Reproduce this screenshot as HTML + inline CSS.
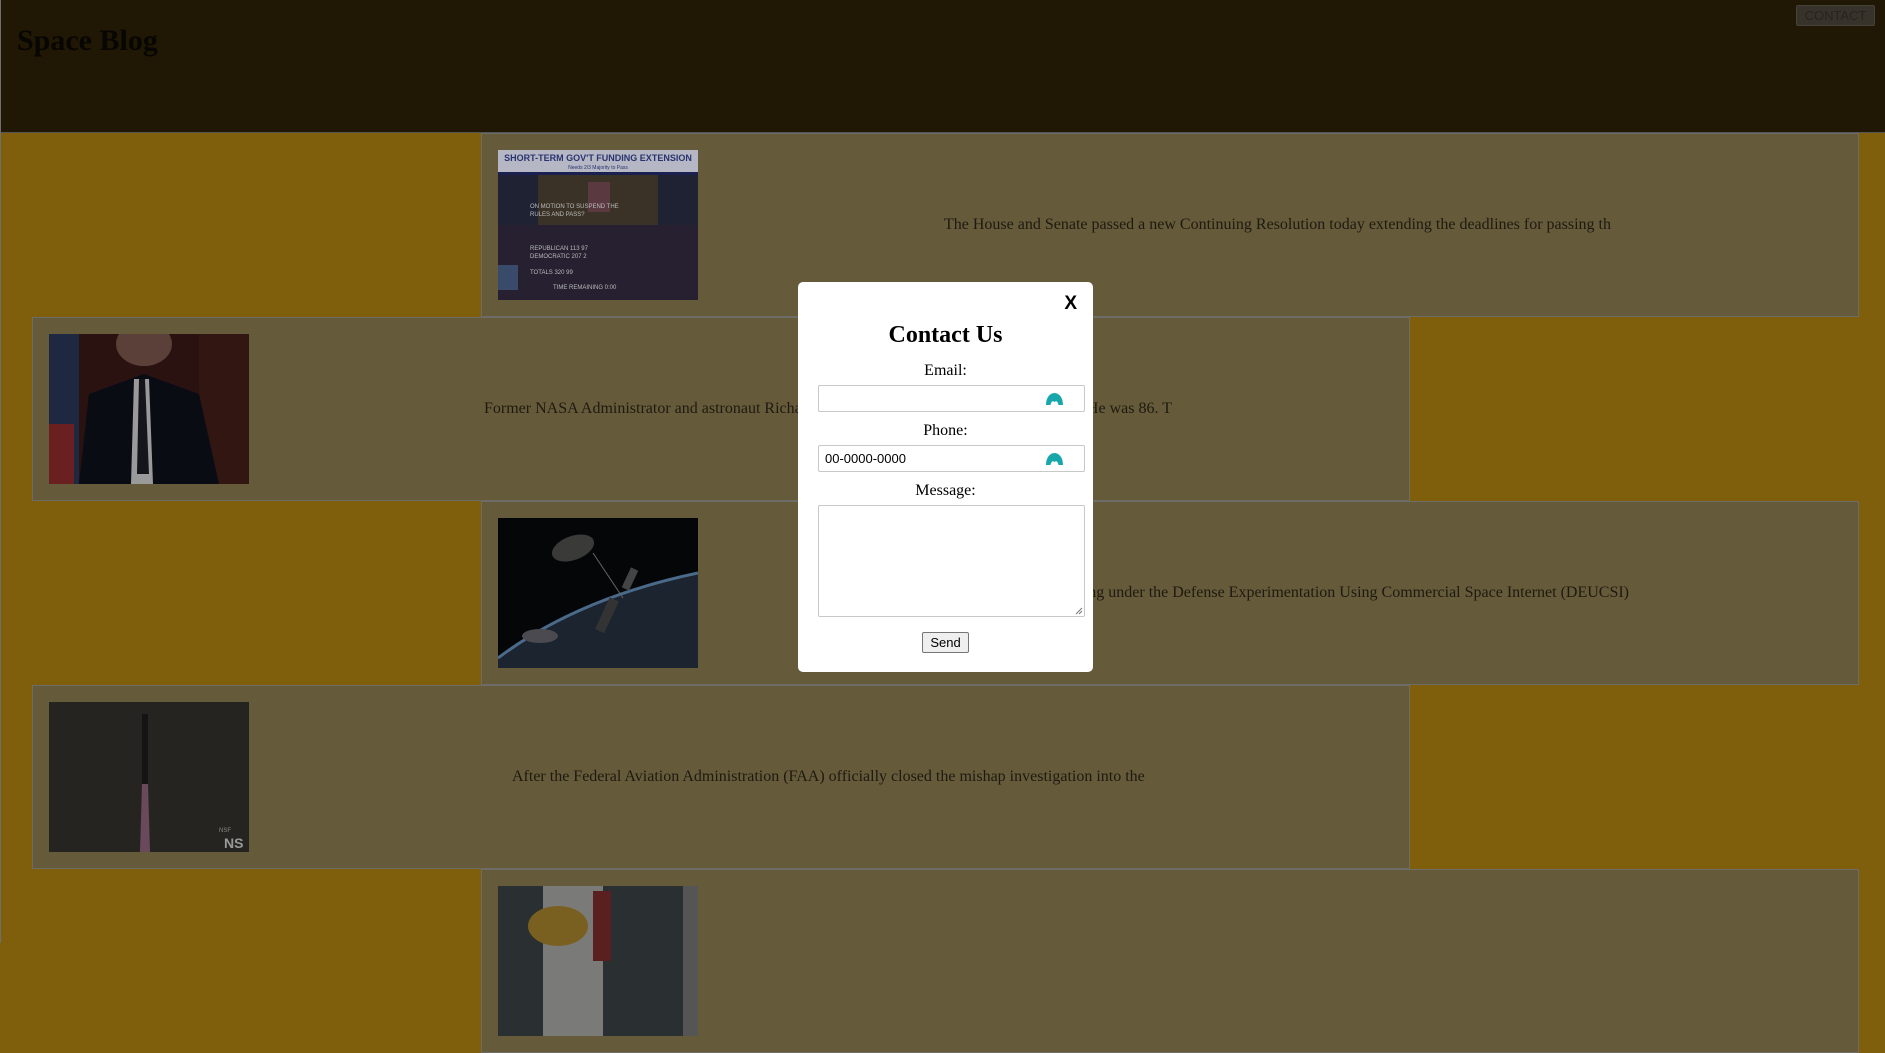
<!DOCTYPE html>
<html><head><meta charset="utf-8"><style>
*{box-sizing:border-box;margin:0;padding:0}
body{width:1885px;height:943px;overflow:hidden;background:#7f5f0b;font-family:"Liberation Serif",serif;position:relative}
.lline{position:absolute;left:0;top:0;width:1px;height:943px;background:#6e6e6e}
.hdr{position:absolute;left:1px;top:0;width:1884px;height:133px;background:#201804;border-bottom:1px solid #555}
.hdr h1{position:absolute;left:16px;top:23px;font-size:30px;font-weight:bold;color:#080602;line-height:36px}
.cbtn{position:absolute;left:1795px;top:5px;width:79px;height:21px;background:#37332a;border:1px solid #44403a;border-radius:2px;font-family:"Liberation Sans",sans-serif;font-size:13px;color:#272420;text-align:center;line-height:19px}
.card{position:absolute;height:184px;background:#655a3a;border:1px solid #6e6c66}
.img{position:absolute;left:16px;top:16px;width:200px;height:150px;overflow:hidden}
.txt{position:absolute;white-space:nowrap;font-size:16px;color:#1f1a10;line-height:20px}
.modal{position:absolute;left:798px;top:282px;width:295px;height:390px;background:#fff;border-radius:5px}
.x{position:absolute;right:16px;top:11px;font-family:"Liberation Sans",sans-serif;font-weight:bold;font-size:19px;color:#000}
.modal h2{position:absolute;left:0;width:100%;top:38px;text-align:center;font-size:24px;font-weight:bold;line-height:30px}
.lbl{position:absolute;left:0;width:100%;text-align:center;font-size:16px;line-height:20px;color:#000}
.inp{position:absolute;left:20px;width:267px;height:27px;border:1px solid #c8c8c8;border-radius:2px;font-family:"Liberation Sans",sans-serif;font-size:13px;line-height:25px;padding-left:6px;color:#000}
.ic{position:absolute;right:21px;top:6px;display:block}
.send{position:absolute;left:124px;top:350px;width:47px;height:21px;border:1px solid #767676;border-radius:2px;background:#efefef;font-family:"Liberation Sans",sans-serif;font-size:13px;text-align:center;line-height:19px}
</style></head><body>
<div class="lline"></div>
<div class="hdr"><h1>Space Blog</h1><div class="cbtn">CONTACT</div></div>

<div class="card" style="left:481px;top:133px;width:1378px">
 <div class="img"><svg width="200" height="150"><rect width="200" height="150" fill="#1f2233"/><rect width="200" height="22" fill="#b5b8c4"/><text x="100" y="11" font-size="9" font-family="Liberation Sans" font-weight="bold" fill="#2a3270" text-anchor="middle">SHORT-TERM GOV'T FUNDING EXTENSION</text><text x="100" y="19" font-size="5" font-family="Liberation Sans" fill="#2a3270" text-anchor="middle">Needs 2/3 Majority to Pass</text><rect y="22" width="200" height="3" fill="#1a2050"/><rect x="40" y="25" width="120" height="50" fill="#3a3226"/><rect x="90" y="32" width="22" height="30" fill="#5a3a40"/><rect y="75" width="200" height="75" fill="#262030"/><rect x="0" y="115" width="20" height="25" fill="#3a4a6a"/><text x="32" y="58" font-size="6" fill="#bbb" font-family="Liberation Sans">ON MOTION TO SUSPEND THE</text><text x="32" y="66" font-size="6" fill="#bbb" font-family="Liberation Sans">RULES AND PASS?</text><text x="32" y="100" font-size="6" fill="#bbb" font-family="Liberation Sans">REPUBLICAN  113  97</text><text x="32" y="108" font-size="6" fill="#bbb" font-family="Liberation Sans">DEMOCRATIC  207  2</text><text x="32" y="124" font-size="6" fill="#bbb" font-family="Liberation Sans">TOTALS  320  99</text><text x="55" y="139" font-size="6" fill="#bbb" font-family="Liberation Sans">TIME REMAINING  0:00</text></svg></div>
 <div class="txt" style="left:462px;top:81px">The House and Senate passed a new Continuing Resolution today extending the deadlines for passing th</div>
</div>

<div class="card" style="left:32px;top:317px;width:1378px">
 <div class="img"><svg width="200" height="150"><rect width="200" height="150" fill="#2a1210"/><rect x="0" width="30" height="150" fill="#1e2840"/><rect x="0" y="90" width="25" height="60" fill="#6a2020"/><rect x="150" width="50" height="150" fill="#321612"/><ellipse cx="95" cy="10" rx="28" ry="22" fill="#5a4038"/><path d="M30 150 L40 60 L95 40 L150 60 L170 150Z" fill="#0a0c14"/><path d="M85 45 L100 45 L104 150 L82 150Z" fill="#9a9a9a"/><path d="M90 45 L96 45 L100 140 L88 140Z" fill="#14161c"/></svg></div>
 <div class="txt" style="left:451px;top:81px">Former NASA Administrator and astronaut Richard Truly passed away on Tuesday, Feb 27th. He was 86. T</div>
</div>

<div class="card" style="left:481px;top:501px;width:1378px">
 <div class="img"><svg width="200" height="150"><rect width="200" height="150" fill="#050608"/><path d="M0 150 L0 140 Q80 80 200 55 L200 150Z" fill="#1c2430"/><path d="M0 140 Q80 80 200 55" stroke="#4a6a8a" stroke-width="3" fill="none"/><ellipse cx="42" cy="118" rx="18" ry="7" fill="#4a4a50"/><ellipse cx="75" cy="30" rx="22" ry="12" transform="rotate(-20 75 30)" fill="#3a3a38"/><line x1="95" y1="35" x2="125" y2="80" stroke="#666"/><rect x="105" y="80" width="10" height="35" fill="#333" transform="rotate(25 110 95)"/><rect x="128" y="50" width="8" height="22" fill="#444" transform="rotate(25 132 61)"/></svg></div>
 <div class="txt" style="right:229px;top:81px">SpaceX has completed its first satellite testing under the Defense Experimentation Using Commercial Space Internet (DEUCSI)</div>
</div>

<div class="card" style="left:32px;top:685px;width:1378px">
 <div class="img"><svg width="200" height="150"><rect width="200" height="150" fill="#262420"/><rect x="93" y="12" width="6" height="70" fill="#141414"/><path d="M93 82 L99 82 L101 150 L91 150Z" fill="#6a4a5a"/><text x="170" y="130" font-size="6" fill="#888" font-family="Liberation Sans">NSF</text><text x="175" y="146" font-size="14" font-weight="bold" fill="#999" font-family="Liberation Sans">NS</text></svg></div>
 <div class="txt" style="left:479px;top:81px">After the Federal Aviation Administration (FAA) officially closed the mishap investigation into the</div>
</div>

<div class="card" style="left:481px;top:869px;width:1378px">
 <div class="img"><svg width="200" height="150"><rect width="200" height="150" fill="#2a3032"/><rect x="45" y="0" width="60" height="150" fill="#7a7a78"/><rect x="95" y="5" width="18" height="70" fill="#5a2020"/><ellipse cx="60" cy="40" rx="30" ry="20" fill="#7a6020"/><rect x="185" width="15" height="150" fill="#555"/></svg></div>
</div>

<div class="modal">
 <div class="x">X</div>
 <h2>Contact Us</h2>
 <div class="lbl" style="top:79px">Email:</div>
 <div class="inp" style="top:103px"><svg class="ic" width="17" height="13" viewBox="0 0 17 13"><path d="M0 13 C0 -3 17 -3 17 13 L12.5 13 C12 10 10.5 8 8.5 10 C6.5 8 5 10 4.5 13 Z" fill="#17a7aa"/></svg></div>
 <div class="lbl" style="top:139px">Phone:</div>
 <div class="inp" style="top:163px">00-0000-0000<svg class="ic" width="17" height="13" viewBox="0 0 17 13"><path d="M0 13 C0 -3 17 -3 17 13 L12.5 13 C12 10 10.5 8 8.5 10 C6.5 8 5 10 4.5 13 Z" fill="#17a7aa"/></svg></div>
 <div class="lbl" style="top:199px">Message:</div>
 <div class="inp" style="top:223px;height:112px"><svg style="position:absolute;right:1px;bottom:1px" width="8" height="8"><path d="M7 1 L1 7 M7 4 L4 7" stroke="#777" stroke-width="1"/></svg></div>
 <div class="send">Send</div>
</div>
</body></html>
